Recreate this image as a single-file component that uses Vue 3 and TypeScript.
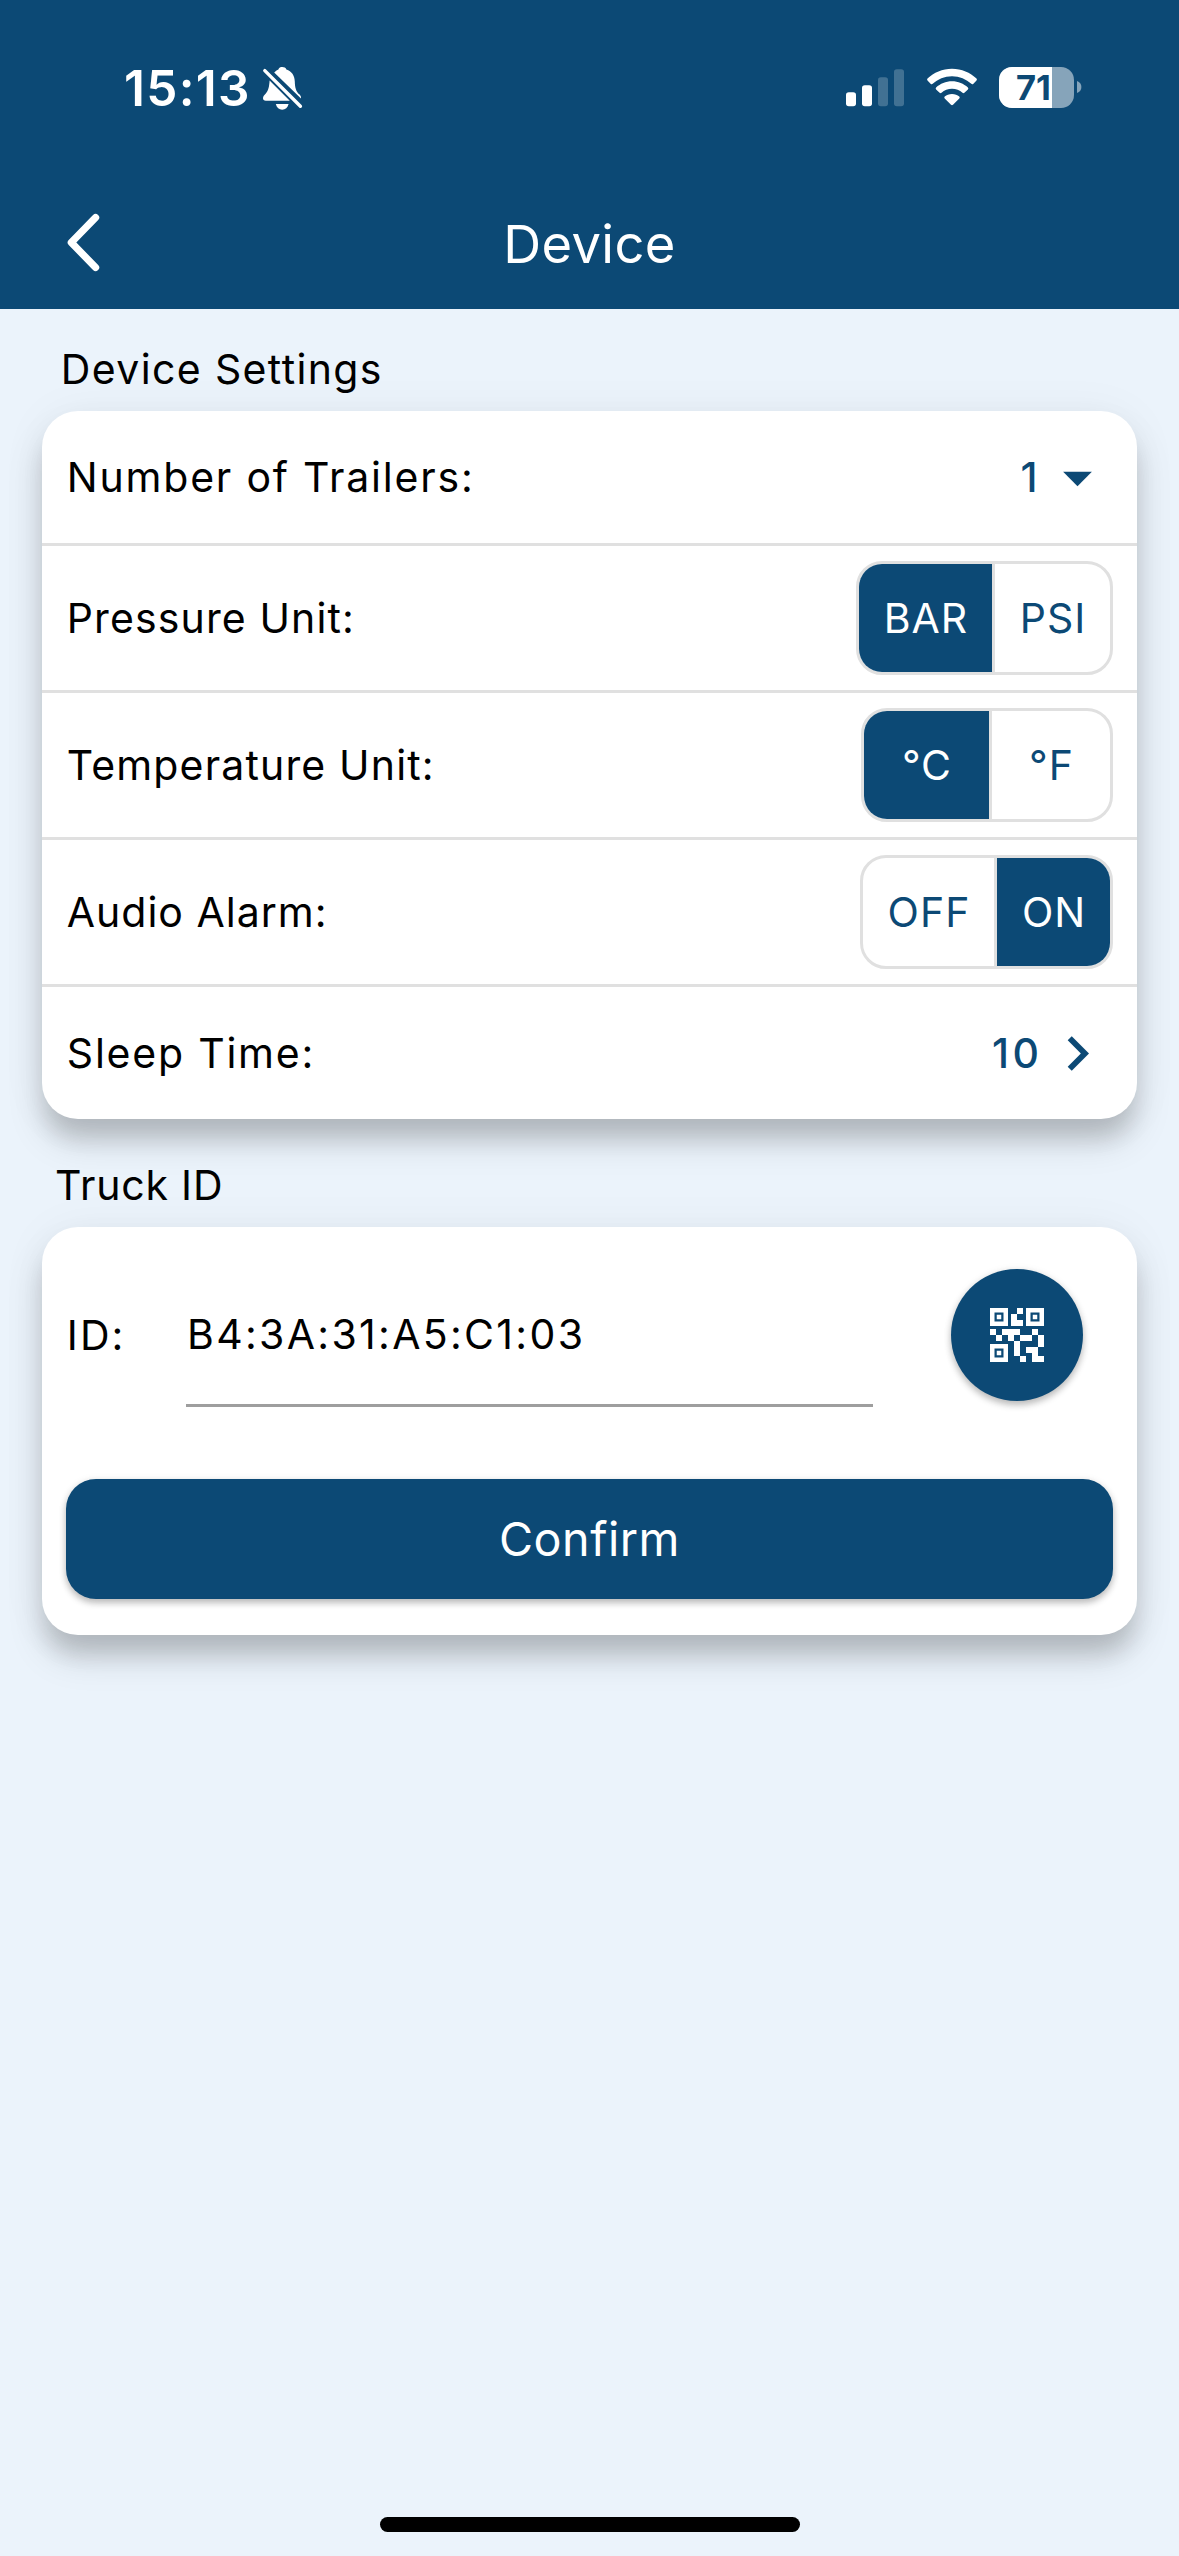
<script setup lang="ts">
import { ref } from 'vue'

interface ToggleRow {
  key: string
  label: string
  options: string[]
  selected: number
}

const toggles = ref<ToggleRow[]>([
  { key: 'pressure', label: 'Pressure Unit:', options: ['BAR', 'PSI'], selected: 0 },
  { key: 'temperature', label: 'Temperature Unit:', options: ['°C', '°F'], selected: 0 },
  { key: 'alarm', label: 'Audio Alarm:', options: ['OFF', 'ON'], selected: 1 },
])
const trailers = ref(1)
const sleepTime = ref(10)
const truckId = ref('B4:3A:31:A5:C1:03')
</script>

<template>
  <div class="screen">
    <header class="header">
      <div class="status">
        <span class="time">15:13</span>
        <svg class="bell" width="42" height="46" viewBox="0 0 42 46">
          <path fill="#fff" d="M12.2 6.6C13.8 4.6 15.2 3.8 16.4 3.4C17 1.6 18.5 1 20.3 1C22.2 1 23.7 1.7 24.4 3.5C29.6 5.2 32.6 9.4 32.8 15.4C33 21.5 33.8 25.2 37.6 28.6C38.7 29.8 39.2 31 39 32.6Z" />
          <path fill="#fff" d="M7.6 14.6L27.8 34.8H3.8C2 34.8 1 33.9 1 32.3C1 30.6 2.2 29.3 3.8 27.6C6.6 24.4 7.2 20.6 7.6 14.6Z" />
          <path fill="#fff" d="M13.8 38H26.6C25.6 41.6 23.4 43.7 20.2 43.7S14.8 41.6 13.8 38Z" />
          <path d="M2.8 4.6L38.4 40.2" stroke="#fff" stroke-width="3.4" stroke-linecap="round" />
        </svg>
        <div class="indicators">
          <svg class="signal" width="58" height="38" viewBox="0 0 58 38">
            <rect x="0" y="23.3" width="10" height="14" rx="2.8" fill="#fff" />
            <rect x="16" y="16.3" width="10" height="21" rx="2.8" fill="#fff" />
            <rect x="32" y="8.3" width="10" height="29" rx="2.8" fill="#fff" opacity=".22" />
            <rect x="48" y="0.3" width="10" height="37" rx="2.8" fill="#fff" opacity=".22" />
          </svg>
          <svg class="wifi" width="52" height="38" viewBox="0 0 52 38">
            <path fill="#fff" d="M26 .7C35.6 .7 44.2 4.5 50.5 10.6Q51.4 11.6 50.5 12.6L47.2 15.9Q46.3 16.7 45.3 15.8C40.3 11.1 33.5 8.2 26 8.2S11.7 11.1 6.7 15.8Q5.7 16.7 4.8 15.9L1.5 12.6Q.6 11.6 1.5 10.6C7.8 4.5 16.4 .7 26 .7Z" />
            <path fill="#fff" d="M26 13.3C32.2 13.3 37.7 15.7 41.9 19.5Q42.8 20.5 41.9 21.4L38.4 24.8Q37.5 25.6 36.5 24.7C33.7 22.2 30 20.7 26 20.7S18.3 22.2 15.5 24.7Q14.5 25.6 13.6 24.8L10.1 21.4Q9.2 20.5 10.1 19.5C14.3 15.7 19.8 13.3 26 13.3Z" />
            <path fill="#fff" d="M26 26C28.9 26 31.4 27 33.3 28.6Q34.2 29.5 33.3 30.4L27 36.7Q26 37.6 25 36.7L18.7 30.4Q17.8 29.5 18.7 28.6C20.6 27 23.1 26 26 26Z" />
          </svg>
          <div class="battery">
            <div class="level"></div>
            <span class="percent">71</span>
          </div>
          <svg class="nub" width="5" height="12" viewBox="0 0 5 12">
            <path fill="#fff" opacity=".5" d="M0 0C2.8 1 4.4 3.3 4.4 6S2.8 11 0 12Z" />
          </svg>
        </div>
      </div>
      <div class="appbar">
        <svg class="back" width="40" height="64" viewBox="0 0 40 64">
          <path d="M31.6 6.5L7.3 31.5L31.6 56.5" fill="none" stroke="#fff" stroke-width="7.2" stroke-linecap="round" stroke-linejoin="round" />
        </svg>
        <h1 class="title">Device</h1>
      </div>
    </header>

    <main class="content">
      <h2 class="section settings-title">Device Settings</h2>
      <section class="card">
        <div class="row short">
          <span class="label trailers">Number of Trailers:</span>
          <div class="value">
            <span class="number">{{ trailers }}</span>
            <svg width="69" height="69" viewBox="0 0 24 24"><path fill="#0c4975" d="M7 10l5 5 5-5z" /></svg>
          </div>
        </div>
        <div v-for="row in toggles" :key="row.key" class="row">
          <span class="label" :class="row.key">{{ row.label }}</span>
          <div class="toggle" :class="row.key">
            <button
              v-for="(option, i) in row.options"
              :key="option"
              class="option"
              :class="{ active: row.selected === i }"
              @click="row.selected = i"
            >{{ option }}</button>
          </div>
        </div>
        <div class="row short">
          <span class="label sleep">Sleep Time:</span>
          <div class="value">
            <span class="number ten">{{ sleepTime }}</span>
            <svg width="69" height="69" viewBox="0 0 24 24"><path fill="#0c4975" d="M10 6L8.59 7.41 13.17 12l-4.58 4.59L10 18l6-6z" /></svg>
          </div>
        </div>
      </section>

      <h2 class="section truck-title">Truck ID</h2>
      <section class="card truck">
        <div class="id-row">
          <span class="label id-label">ID:</span>
          <div class="field"><span class="id-text">{{ truckId }}</span></div>
          <button class="qr">
            <svg width="72" height="72" viewBox="0 0 24 24">
              <path fill="#fff" d="M15,21h-2v-2h2V21z M13,14h-2v5h2V14z M21,12h-2v4h2V12z M19,10h-2v2h2V10z M7,12H5v2h2V12z M5,10H3v2h2V10z M12,5h2V3h-2V5z M4.5,4.5v3h3v-3H4.5z M9,9H3V3h6V9z M4.5,16.5v3h3v-3H4.5z M9,21H3v-6h6V21z M16.5,4.5v3h3v-3H16.5z M21,9h-6V3h6V9z M19,19v-3l-4,0v2h2v3h4v-2H19z M17,12l-4,0v2h4V12z M13,10H7v2h2v2h2v-2h2V10z M14,9V7h-2V5h-2v4L14,9z M6.75,5.25h-1.5v1.5h1.5V5.25z M6.75,17.25h-1.5v1.5h1.5V17.25z M18.75,5.25h-1.5v1.5h1.5V5.25z" />
            </svg>
          </button>
        </div>
        <button class="confirm">Confirm</button>
      </section>
    </main>

    <div class="home"></div>
  </div>
</template>

<style>
body {
  background: #ebf3fb;
}
</style>

<style scoped>
* {
  box-sizing: border-box;
}
.screen {
  width: 1179px;
  height: 2556px;
  display: flex;
  flex-direction: column;
  background: #ebf3fb;
  color: #000;
  font-family: Inter, "Liberation Sans", sans-serif;
  font-size: 41px;
  overflow: hidden;
}
button {
  border: 0;
  margin: 0;
  padding: 0;
  font: inherit;
  background: none;
}
svg {
  display: block;
  flex: none;
}
.header {
  height: 309px;
  flex: none;
  background: #0c4975;
  color: #fff;
}
.status {
  height: 177px;
  display: flex;
  padding-left: 124px;
}
.time {
  width: 138px;
  margin-top: 58px;
  line-height: 60px;
  font-size: 49.5px;
  font-weight: 600;
  letter-spacing: 1.3px;
  white-space: nowrap;
}
.bell {
  margin-top: 66px;
}
.indicators {
  display: flex;
  align-items: flex-start;
  margin-left: auto;
  padding-right: 97px;
}
.signal {
  margin-top: 68.5px;
}
.wifi {
  margin: 68px 0 0 21.5px;
}
.battery {
  position: relative;
  width: 75px;
  height: 41px;
  margin: 67px 0 0 21.5px;
  border-radius: 13px;
  overflow: hidden;
  background: rgba(255, 255, 255, 0.5);
}
.level {
  width: 53px;
  height: 41px;
  background: #fff;
}
.percent {
  position: absolute;
  left: 17px;
  top: 0;
  line-height: 41px;
  font-size: 34.5px;
  font-weight: 650;
  letter-spacing: 0;
  color: #0c4975;
}
.nub {
  margin: 81px 0 0 3px;
}
.appbar {
  height: 132px;
  display: grid;
  grid-template-columns: 120px 1fr 120px;
}
.back {
  margin: 34px 0 0 64px;
}
.title {
  margin: 37px 0 0;
  text-align: center;
  font-size: 52.5px;
  line-height: 60px;
  font-weight: 400;
  letter-spacing: 0.4px;
}
.content {
  padding: 0 42px;
  flex: 1;
}
.section {
  margin: 0;
  font-size: 41px;
  line-height: 60px;
  font-weight: 400;
}
.settings-title {
  height: 102px;
  padding: 30px 0 0 18.8px;
  letter-spacing: 1.37px;
}
.truck-title {
  height: 108px;
  padding: 36px 0 0 13px;
  letter-spacing: 0.8px;
}
.card {
  border-radius: 36px;
  background: #fff;
  box-shadow:
    0 22px 22px -4px rgba(0, 0, 0, 0.12),
    0 23px 36px rgba(0, 0, 0, 0.13),
    0 3px 48px rgba(0, 0, 0, 0.05);
}
.row {
  display: flex;
  align-items: center;
  justify-content: space-between;
  height: 147px;
  padding: 0 24px;
  border-bottom: 3px solid #e0e0e0;
}
.row.short {
  height: 135px;
}
.row.short:last-child {
  height: 132px;
  border-bottom: 0;
}
.label {
  padding-left: 0.8px;
  white-space: nowrap;
}
.label.trailers {
  letter-spacing: 1.8px;
}
.label.pressure {
  letter-spacing: 1.12px;
}
.label.temperature {
  letter-spacing: 1.16px;
}
.label.alarm {
  letter-spacing: 1px;
}
.label.sleep {
  letter-spacing: 1.78px;
}
.value {
  display: flex;
  align-items: center;
  gap: 5px;
  padding-right: 1.5px;
}
.number {
  font-weight: 500;
  color: #0c4975;
}
.number.ten {
  margin-right: -5px;
  letter-spacing: 3.5px;
}
.toggle {
  display: flex;
  height: 114px;
  border: 3px solid #e0e0e0;
  border-radius: 26px;
  overflow: hidden;
}
.option {
  height: 108px;
  flex: 1;
  padding-left: 1px;
  color: #0c4975;
  letter-spacing: 1px;
  text-align: center;
  white-space: nowrap;
}
.option + .option {
  border-left: 3px solid #e0e0e0;
}
.option.active {
  background: #0c4975;
  color: #fff;
}
.toggle.pressure {
  width: 257px;
}
.toggle.pressure .option:first-child {
  flex: 0 0 133px;
}
.toggle.temperature {
  width: 252px;
}
.toggle.temperature .option:first-child {
  flex: 0 0 125px;
}
.toggle.alarm {
  width: 253px;
}
.toggle.alarm .option:first-child {
  flex: 0 0 131px;
}
.truck {
  height: 408px;
  padding: 0 24px;
}
.id-row {
  display: flex;
  align-items: center;
  height: 216px;
}
.id-label {
  width: 120px;
  letter-spacing: 2.1px;
}
.field {
  width: 687px;
  height: 144px;
  border-bottom: 3px solid #9e9e9e;
  padding-left: 1px;
  line-height: 143px;
  letter-spacing: 2.31px;
}
.qr {
  display: flex;
  align-items: center;
  justify-content: center;
  width: 132px;
  height: 132px;
  margin-left: 78px;
  border-radius: 50%;
  background: #0c4975;
  box-shadow: 0 4px 7px rgba(0, 0, 0, 0.24), 0 1px 8px rgba(0, 0, 0, 0.08);
}
.confirm {
  display: block;
  width: 100%;
  height: 120px;
  margin-top: 36px;
  border-radius: 30px;
  background: #0c4975;
  color: #fff;
  font-size: 46.7px;
  line-height: 120px;
  letter-spacing: 0.5px;
  box-shadow: 0 4px 7px rgba(0, 0, 0, 0.24), 0 1px 8px rgba(0, 0, 0, 0.08);
}
.home {
  flex: none;
  width: 420px;
  height: 15px;
  margin: 0 auto 24px;
  border-radius: 8px;
  background: #000;
}
</style>
